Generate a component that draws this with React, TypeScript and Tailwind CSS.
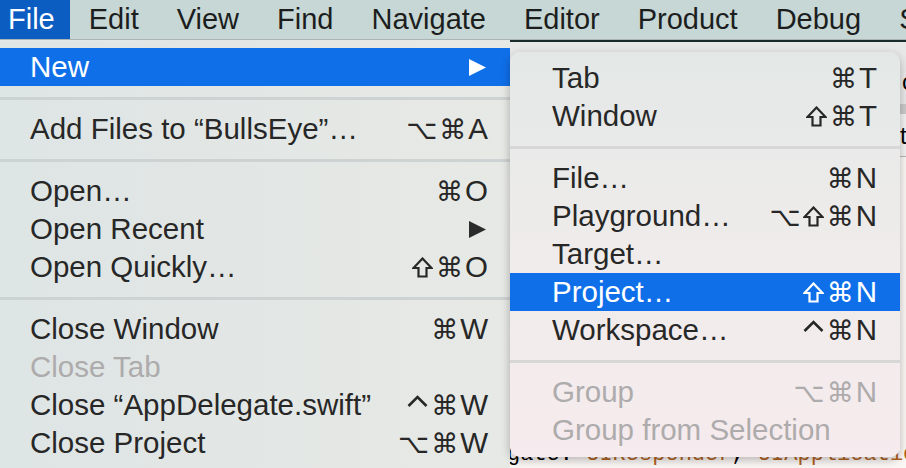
import React from "react";

type Item =
  | { sep: true }
  | { sep?: false; label: string; keys?: string; arrow?: boolean; disabled?: boolean; active?: boolean };

const fileMenu: Item[] = [
  { label: "New", arrow: true, active: true },
  { sep: true },
  { label: "Add Files to \u201cBullsEye\u201d\u2026", keys: "⌥⌘A" },
  { sep: true },
  { label: "Open\u2026", keys: "⌘O" },
  { label: "Open Recent", arrow: true },
  { label: "Open Quickly\u2026", keys: "⇧⌘O" },
  { sep: true },
  { label: "Close Window", keys: "⌘W" },
  { label: "Close Tab", disabled: true },
  { label: "Close \u201cAppDelegate.swift\u201d", keys: "⌃⌘W" },
  { label: "Close Project", keys: "⌥⌘W" },
];

const newMenu: Item[] = [
  { label: "Tab", keys: "⌘T" },
  { label: "Window", keys: "⇧⌘T" },
  { sep: true },
  { label: "File\u2026", keys: "⌘N" },
  { label: "Playground\u2026", keys: "⌥⇧⌘N" },
  { label: "Target\u2026" },
  { label: "Project\u2026", keys: "⇧⌘N", active: true },
  { label: "Workspace\u2026", keys: "⌃⌘N" },
  { sep: true },
  { label: "Group", keys: "⌥⌘N", disabled: true },
  { label: "Group from Selection", disabled: true },
];

const menuTitles = ["Edit", "View", "Find", "Navigate", "Editor", "Product", "Debug", "Source"];

function ShiftIcon() {
  return (
    <svg width="21" height="21" viewBox="0 0 21 21" className="mr-[3px]" aria-label="⇧">
      <path d="M10.5 1.5 L19.5 11 L14.5 11 L14.5 19.5 L6.5 19.5 L6.5 11 L1.5 11 Z" fill="none" stroke="currentColor" strokeWidth="2.2" strokeLinejoin="miter" />
    </svg>
  );
}

function CtrlIcon() {
  return (
    <svg width="21" height="21" viewBox="0 0 21 21" className="mr-[3px]" aria-label="⌃">
      <path d="M1.5 11 L10.5 2 L19.5 11" fill="none" stroke="currentColor" strokeWidth="2.6" />
    </svg>
  );
}

function Keys({ keys }: { keys: string }) {
  return (
    <span className="flex items-center">
      {keys.split("").map((k, i) => {
        if (k === "⇧") return <ShiftIcon key={i} />;
        if (k === "⌃") return <CtrlIcon key={i} />;
        if (k === "⌘" || k === "⌥")
          return (
            <span key={i} className="font-['DejaVu_Sans',sans-serif] text-[27px] mr-[2px]">
              {k}
            </span>
          );
        return <span key={i}>{k}</span>;
      })}
    </span>
  );
}

function Arrow({ white }: { white?: boolean }) {
  return (
    <svg width="17" height="17" viewBox="0 0 17 17" className="mr-[2px]">
      <polygon points="0,0 17,8.5 0,17" fill={white ? "#ffffff" : "#2b2b2b"} />
    </svg>
  );
}

function MenuList({ items, padL, padR, sepColor }: { items: Item[]; padL: string; padR: string; sepColor: string }) {
  return (
    <>
      {items.map((it, i) => {
        if (it.sep) {
          return (
            <div key={i} className="h-[24px] flex items-center">
              <div className={`h-[3px] w-full ${sepColor}`} />
            </div>
          );
        }
        const color = it.active ? "bg-[#0f6fe9] text-white" : it.disabled ? "text-[#aeabac]" : "text-[#272727]";
        return (
          <div key={i} className={`h-[38px] flex items-center justify-between text-[29.5px] ${padL} ${padR} ${color}`}>
            <span>{it.label}</span>
            {it.keys && <Keys keys={it.keys} />}
            {it.arrow && <Arrow white={it.active} />}
          </div>
        );
      })}
    </>
  );
}

export default function App() {
  return (
    <div className="relative w-[906px] h-[468px] overflow-hidden bg-[#e4e7e6] font-['Liberation_Sans',Arial,sans-serif] text-[29px] leading-none">
      {/* menu bar */}
      <div className="h-[40px] flex items-center bg-[#c7d7d5] border-b border-[#a9b4b3] text-[#1c1e1e] whitespace-nowrap">
        <div className="h-full flex items-center pl-[8px] pr-[15px] bg-[#0b5dc1] text-white">File</div>
        {menuTitles.map((t) => (
          <div key={t} className="px-[19px] shrink-0">
            {t}
          </div>
        ))}
      </div>

      {/* editor behind the menus */}
      <div className="flex h-[428px]">
        <div className="w-[510px] shrink-0" />
        <div className="flex-1 flex flex-col border-t-2 border-[#1b2b2b] overflow-hidden whitespace-nowrap">
          <div className="h-[70px] bg-[#e8e8e8] pl-[392px] pt-[28px] text-[24px] text-black">c</div>
          <div className="h-[12px] bg-[#cacaca]" />
          <div className="h-[50px] bg-[#f2f2f2] pl-[390px] pt-[10px] text-[24px] text-black border-b border-[#b6b6b6]">t</div>
          <div className="flex-1 bg-[#fbf7f5] pt-[285px] -ml-[3px] font-['Liberation_Mono',monospace] text-[22px] leading-[26px] text-black">
            gate: <span className="text-[#b3621f]">UIResponder</span>, <span className="text-[#b3621f]">UIApplicationDelegate</span> {"{"}
          </div>
        </div>
      </div>

      {/* File menu */}
      <div className="absolute left-0 top-[41px] bottom-0 w-[510px] pt-[7px] bg-linear-to-r from-[#dee5e5] to-[#e7e9e5] whitespace-nowrap">
        <MenuList items={fileMenu} padL="pl-[30px]" padR="pr-[22px]" sepColor="bg-[#cdd2d2]" />
      </div>

      {/* New submenu */}
      <div className="absolute left-[510px] top-[52px] w-[390px] h-[405px] pt-[7px] rounded-[10px] overflow-hidden bg-linear-to-b from-[#e3e8e7] via-[#efeceb] to-[#f6ebee] shadow-[0_3px_10px_rgba(0,0,0,0.28)] whitespace-nowrap">
        <MenuList items={newMenu} padL="pl-[42px]" padR="pr-[23px]" sepColor="bg-[#d8d7d7]" />
      </div>
    </div>
  );
}
